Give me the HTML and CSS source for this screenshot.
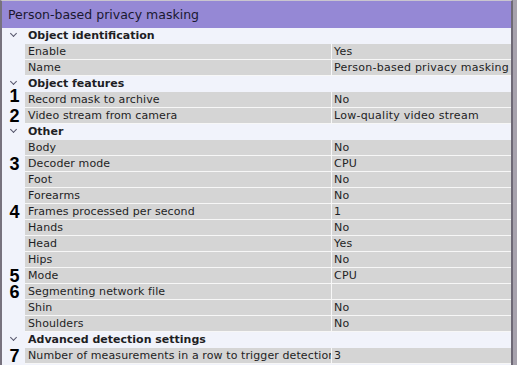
FILE: index.html
```html
<!DOCTYPE html>
<html lang="en">
<head>
  <meta charset="UTF-8" />
  <title>Person-based privacy masking</title>
  <link rel="stylesheet" href="styles.css">
</head>
<body>
  <div class="panel">
    <div class="title">Person-based privacy masking</div>

    <div class="props">
      <div class="group"><span class="chev"></span><span class="group-name">Object identification</span></div>
      <div class="row"><span class="mark"></span><span class="name">Enable</span><span class="value">Yes</span></div>
      <div class="row"><span class="mark"></span><span class="name">Name</span><span class="value">Person-based privacy masking</span></div>

      <div class="group"><span class="chev"></span><span class="group-name">Object features</span></div>
      <div class="row"><span class="mark up">1</span><span class="name">Record mask to archive</span><span class="value">No</span></div>
      <div class="row"><span class="mark">2</span><span class="name">Video stream from camera</span><span class="value">Low-quality video stream</span></div>

      <div class="group"><span class="chev"></span><span class="group-name">Other</span></div>
      <div class="row"><span class="mark"></span><span class="name">Body</span><span class="value">No</span></div>
      <div class="row"><span class="mark">3</span><span class="name">Decoder mode</span><span class="value">CPU</span></div>
      <div class="row"><span class="mark"></span><span class="name">Foot</span><span class="value">No</span></div>
      <div class="row"><span class="mark"></span><span class="name">Forearms</span><span class="value">No</span></div>
      <div class="row"><span class="mark">4</span><span class="name">Frames processed per second</span><span class="value">1</span></div>
      <div class="row"><span class="mark"></span><span class="name">Hands</span><span class="value">No</span></div>
      <div class="row"><span class="mark"></span><span class="name">Head</span><span class="value">Yes</span></div>
      <div class="row"><span class="mark"></span><span class="name">Hips</span><span class="value">No</span></div>
      <div class="row"><span class="mark">5</span><span class="name">Mode</span><span class="value">CPU</span></div>
      <div class="row"><span class="mark">6</span><span class="name">Segmenting network file</span><span class="value"></span></div>
      <div class="row"><span class="mark"></span><span class="name">Shin</span><span class="value">No</span></div>
      <div class="row"><span class="mark"></span><span class="name">Shoulders</span><span class="value">No</span></div>

      <div class="group"><span class="chev"></span><span class="group-name">Advanced detection settings</span></div>
      <div class="row"><span class="mark">7</span><span class="name">Number of measurements in a row to trigger detection</span><span class="value">3</span></div>
    </div>
  </div>
</body>
</html>
```

FILE: styles.css
```css
body {
  margin: 0;
  background: #a7a2ad;
  font-family: "DejaVu Sans", sans-serif;
  font-size: 11px;
  color: #1e1e24;
}

.panel {
  width: 513px;
  height: 365px;
  box-sizing: border-box;
  background: #f1f3fb;
  border-left: 2px solid #77727e;
  border-right: 2px solid #6e6976;
  border-top: 1px solid #c9c5cf;
  overflow: hidden;
}

.title {
  background: #9588d5;
  color: #1a1830;
  font-size: 12.5px;
  height: 27px;
  line-height: 27px;
  padding-left: 6px;
  white-space: nowrap;
}

.props {
  display: flex;
  flex-direction: column;
}

.group,
.row {
  display: grid;
  grid-template-columns: 23px 306px 1fr;
  height: 16px;
  line-height: 16px;
  white-space: nowrap;
}

.group {
  grid-template-columns: 23px 1fr;
}

.group-name {
  font-weight: bold;
  padding-left: 3px;
}

.chev {
  position: relative;
}

.chev::before {
  content: "";
  position: absolute;
  left: 9px;
  top: 3px;
  width: 4px;
  height: 4px;
  border-right: 1.5px solid #55556a;
  border-bottom: 1.5px solid #55556a;
  transform: rotate(45deg);
}

.mark {
  font-family: "Liberation Sans", Arial, sans-serif;
  font-weight: bold;
  font-size: 18px;
  line-height: 16px;
  color: #000;
  text-align: center;
  padding-left: 2px;
}

.mark.up {
  position: relative;
  top: -4px;
}

.name,
.value {
  background: #d5d5d5;
  border-bottom: 1px solid #f7f7f7;
  padding-left: 3px;
  line-height: 16px;
  overflow: hidden;
}

.name {
  letter-spacing: 0.1px;
}

.value {
  border-left: 1px solid #f7f7f7;
  padding-left: 2px;
  letter-spacing: 0.25px;
}
```
